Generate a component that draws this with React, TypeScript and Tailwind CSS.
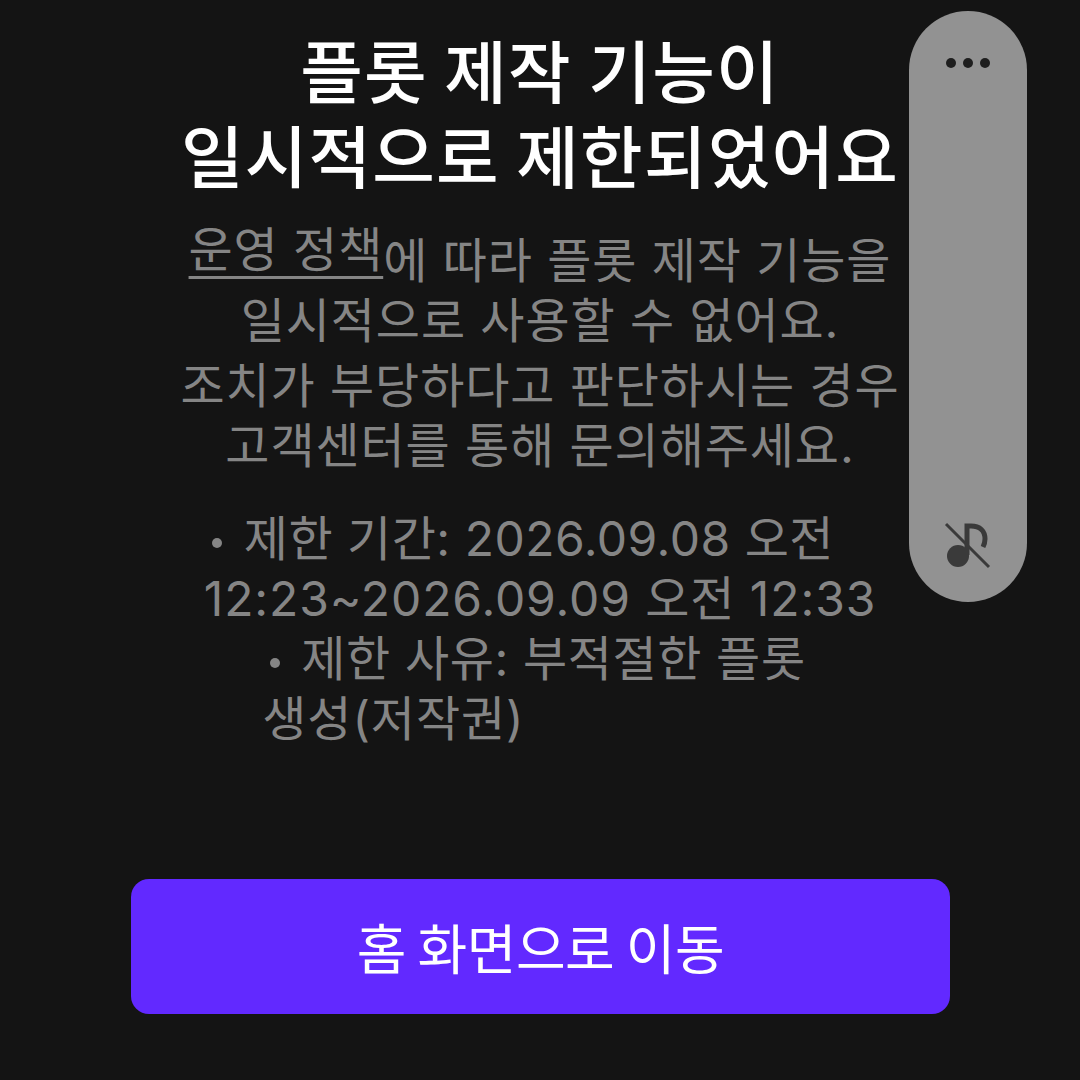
export default function App() {
  return (
    <div className="relative h-[1080px] w-[1080px] overflow-hidden bg-[#141414] font-['Inter','Noto_Sans_CJK_KR',sans-serif]">
      <div className="flex h-full flex-col items-center">
        <h1 className="mt-[26px] text-center font-['Noto_Sans_CJK_KR',sans-serif] text-[68px] font-medium leading-[85px] tracking-[1.2px] text-white">
          플롯 제작 기능이
          <br />
          일시적으로 제한되었어요
        </h1>
        <div className="mt-[35px] flex flex-col items-center text-[48px] font-normal leading-[60px] tracking-[0.9px] text-[#858585]">
          <p className="text-center">
            <span className="inline-block -translate-y-[11px] underline decoration-[3px] underline-offset-[9px]">운영 정책</span>에 따라 플롯 제작 기능을
            <br />
            일시적으로 사용할 수 없어요.
          </p>
          <p className="mt-[5px] text-center">
            조치가 부당하다고 판단하시는 경우
            <br />
            고객센터를 통해 문의해주세요.
          </p>
          <div className="mt-[33px] text-left">
            <span className="tracking-[0.5px]">
              <span className="mb-[8px] ml-[8px] mr-[22px] inline-block h-[10px] w-[10px] rounded-full bg-[#858585]" />
              제한 기간: 2026.09.08 오전
            </span>
            <br />
            12:23~2026.09.09 오전 12:33
          </div>
          <div className="mr-[12px] text-left">
            <span className="tracking-[0.6px]">
              <span className="mb-[8px] ml-[8px] mr-[21px] inline-block h-[10px] w-[10px] rounded-full bg-[#858585]" />
              제한 사유: 부적절한 플롯
            </span>
            <br />
            생성(저작권)
          </div>
        </div>
        <button className="absolute left-[131px] top-[879px] flex h-[135px] w-[819px] items-center justify-center rounded-[18px] bg-[#6229ff] font-['Noto_Sans_CJK_KR',sans-serif] text-[54px] font-normal tracking-[-0.5px] text-white">
          홈 화면으로 이동
        </button>
      </div>
      <div className="absolute left-[909px] top-[11px] flex h-[591px] w-[118px] flex-col items-center justify-between rounded-[59px] bg-[#929292] pb-[33px] pt-[44px]">
        <svg width="46" height="16" viewBox="0 0 46 16" fill="#1e1e1e">
          <circle cx="6" cy="8" r="5" />
          <circle cx="23" cy="8" r="5" />
          <circle cx="40" cy="8" r="5" />
        </svg>
        <svg width="48" height="48" viewBox="0 0 48 48" fill="none" stroke="#3a3a3a">
          <circle cx="14" cy="35" r="11" fill="#3a3a3a" stroke="none" />
          <path d="M23 34V5h4c9 0 14 5 14 13 0 4-1 6-2 8" strokeWidth="5" />
          <path d="M2 3l43 43" strokeWidth="3" />
        </svg>
      </div>
    </div>
  );
}
